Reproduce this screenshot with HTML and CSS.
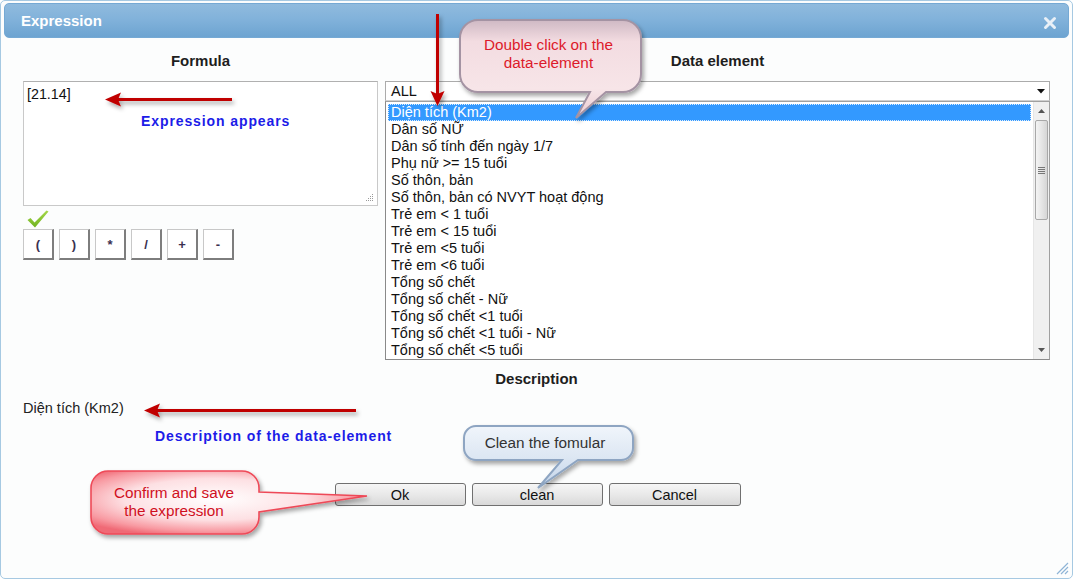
FILE: index.html
```html
<!DOCTYPE html>
<html>
<head>
<meta charset="utf-8">
<title>Expression</title>
<link rel="stylesheet" href="styles.css">
</head>
<body>
<div class="dialog">
  <div class="titlebar">
    <span class="title">Expression</span>
    <svg class="close" width="14" height="14" viewBox="0 0 14 14"><path d="M2.5 2.5 L11.5 11.5 M11.5 2.5 L2.5 11.5" stroke="#e9f0f7" stroke-width="3" stroke-linecap="round"/></svg>
  </div>
  <div class="content">
    <div class="columns">
      <div class="col-left">
        <div class="col-title">Formula</div>
        <div class="formula-box">
          <span class="formula-text">[21.14]</span>
          <svg class="grip" width="8" height="8" viewBox="0 0 8 8"><g fill="#9a9a9a"><rect x="6" y="0" width="1" height="1"/><rect x="4" y="2" width="1" height="1"/><rect x="6" y="2" width="1" height="1"/><rect x="2" y="4" width="1" height="1"/><rect x="4" y="4" width="1" height="1"/><rect x="6" y="4" width="1" height="1"/><rect x="0" y="6" width="1" height="1"/><rect x="2" y="6" width="1" height="1"/><rect x="4" y="6" width="1" height="1"/><rect x="6" y="6" width="1" height="1"/></g></svg>
        </div>
        <div class="check">
          <svg width="22" height="18" viewBox="0 0 22 18"><defs><linearGradient id="cg" x1="0" y1="0" x2="0" y2="1"><stop offset="0" stop-color="#a6d84a"/><stop offset="1" stop-color="#6fb21f"/></linearGradient></defs><path d="M0.5 10 L3.5 8 L7.5 12.5 L19.5 0.5 L21.5 1.5 L8 17.5 Z" fill="url(#cg)"/></svg>
        </div>
        <div class="ops">
          <button class="op">(</button>
          <button class="op">)</button>
          <button class="op">*</button>
          <button class="op">/</button>
          <button class="op">+</button>
          <button class="op">-</button>
        </div>
      </div>
      <div class="col-right">
        <div class="col-title">Data element</div>
        <div class="select">
          <span>ALL</span>
          <svg width="8" height="5" viewBox="0 0 8 5"><path d="M0 0 H8 L4 4.5 Z" fill="#111"/></svg>
        </div>
        <div class="listbox">
          <div class="options">
            <div class="opt selected">Diện tích (Km2)</div>
            <div class="opt">Dân số NỮ</div>
            <div class="opt">Dân số tính đến ngày 1/7</div>
            <div class="opt">Phụ nữ &gt;= 15 tuổi</div>
            <div class="opt">Số thôn, bản</div>
            <div class="opt">Số thôn, bản có NVYT hoạt động</div>
            <div class="opt">Trẻ em &lt; 1 tuổi</div>
            <div class="opt">Trẻ em &lt; 15 tuổi</div>
            <div class="opt">Trẻ em &lt;5 tuổi</div>
            <div class="opt">Trẻ em &lt;6 tuổi</div>
            <div class="opt">Tổng số chết</div>
            <div class="opt">Tổng số chết - Nữ</div>
            <div class="opt">Tổng số chết &lt;1 tuổi</div>
            <div class="opt">Tổng số chết &lt;1 tuổi - Nữ</div>
            <div class="opt">Tổng số chết &lt;5 tuổi</div>
            <div class="opt">Tổng số chết &lt;5 tuổi - Nữ</div>
          </div>
          <div class="scrollbar">
            <div class="sb-arrow"><svg width="7" height="4" viewBox="0 0 7 4"><path d="M0 4 H7 L3.5 0 Z" fill="#555"/></svg></div>
            <div class="sb-thumb">
              <svg width="7" height="7" viewBox="0 0 7 7"><g fill="#777"><rect x="0" y="0" width="7" height="1"/><rect x="0" y="2" width="7" height="1"/><rect x="0" y="4" width="7" height="1"/><rect x="0" y="6" width="7" height="1"/></g></svg>
            </div>
            <div class="sb-track"></div>
            <div class="sb-arrow"><svg width="7" height="4" viewBox="0 0 7 4"><path d="M0 0 H7 L3.5 4 Z" fill="#555"/></svg></div>
          </div>
        </div>
      </div>
    </div>
    <div class="desc-title">Description</div>
    <div class="desc-text">Diện tích (Km2)</div>
    <div class="actions">
      <button class="btn">Ok</button>
      <button class="btn">clean</button>
      <button class="btn btn-wide">Cancel</button>
    </div>
  </div>
  <svg class="resize" width="14" height="14" viewBox="0 0 14 14"><path d="M13 2 L2 13 M13 6 L6 13 M13 10 L10 13" stroke="#8fb4d6" stroke-width="1.2"/></svg>
</div>

<svg class="overlay" width="1073" height="579" viewBox="0 0 1073 579">
  <defs>
    <filter id="sh" x="-20%" y="-20%" width="140%" height="160%">
      <feDropShadow dx="2" dy="3" stdDeviation="2" flood-color="#000" flood-opacity="0.35"/>
    </filter>
    <linearGradient id="pink" x1="0" y1="0" x2="0" y2="1">
      <stop offset="0" stop-color="#cfb9c4"/>
      <stop offset="0.22" stop-color="#f3dce1"/>
      <stop offset="0.7" stop-color="#f7e5e8"/>
      <stop offset="1" stop-color="#ecccd2"/>
    </linearGradient>
    <linearGradient id="blue" x1="0" y1="0" x2="0" y2="1">
      <stop offset="0" stop-color="#f0f5fb"/>
      <stop offset="0.5" stop-color="#dde7f3"/>
      <stop offset="1" stop-color="#c3d4ea"/>
    </linearGradient>
    <radialGradient id="red" cx="0.45" cy="0.45" r="0.6">
      <stop offset="0" stop-color="#ffffff"/>
      <stop offset="0.55" stop-color="#fde0e3"/>
      <stop offset="0.85" stop-color="#f89aa2"/>
      <stop offset="1" stop-color="#f06a76"/>
    </radialGradient>
  </defs>

  <g filter="url(#sh)" fill="#c00000" stroke="none">
    <rect x="116" y="98" width="116" height="3"/>
    <path d="M105 99.5 L121 92.5 L118 99.5 L121 106.5 Z"/>
    <rect x="436" y="14" width="3" height="82"/>
    <path d="M437.5 106 L430.5 91 L437.5 94 L444.5 91 Z"/>
    <rect x="156" y="409" width="200" height="3"/>
    <path d="M144 410.5 L160 403.5 L157 410.5 L160 417.5 Z"/>
  </g>

  <path filter="url(#sh)" d="M478 20 H623 A18 18 0 0 1 641 38 V74 A18 18 0 0 1 623 92 H606 L576 118 L590 92 H478 A18 18 0 0 1 460 74 V38 A18 18 0 0 1 478 20 Z" fill="url(#pink)" stroke="#a493a3" stroke-width="2"/>

  <path filter="url(#sh)" d="M476 426 H621 A12 12 0 0 1 633 438 V448 A12 12 0 0 1 621 460 H578 L538 488 L562 460 H476 A12 12 0 0 1 464 448 V438 A12 12 0 0 1 476 426 Z" fill="url(#blue)" stroke="#8ea5c2" stroke-width="2"/>

  <path filter="url(#sh)" d="M108 471 H242 A17 17 0 0 1 259 488 V492 L367 496 L259 512 V517 A17 17 0 0 1 242 534 H108 A17 17 0 0 1 91 517 V488 A17 17 0 0 1 108 471 Z" fill="url(#red)" stroke="#ee4a58" stroke-width="1.6"/>
</svg>

<div class="note note-expr">Expression appears</div>
<div class="note note-desc">Description of the data-element</div>
<div class="bubble-text bt-double">Double click on the<br>data-element</div>
<div class="bubble-text bt-clean">Clean the fomular</div>
<div class="bubble-text bt-confirm">Confirm and save<br>the expression</div>
</body>
</html>
```

FILE: styles.css
```css
html, body {
  margin: 0;
  padding: 0;
}
body {
  position: relative;
  width: 1073px;
  height: 579px;
  overflow: hidden;
  font-family: "Liberation Sans", Arial, sans-serif;
  font-size: 14px;
  color: #111;
  background: #ffffff;
}
.dialog {
  position: relative;
  box-sizing: border-box;
  height: 579px;
  border: 1px solid #a6c9e2;
  border-radius: 5px;
  padding: 2px 3px;
  background: #fcfdfd;
  display: flex;
  flex-direction: column;
}
.titlebar {
  box-sizing: border-box;
  height: 35px;
  border: 1px solid #75a9d4;
  border-radius: 5px;
  background: linear-gradient(#90bbde, #80b1da 50%, #6da4d1);
  display: flex;
  align-items: center;
  justify-content: space-between;
  padding: 0 11px 0 16px;
}
.title {
  color: #ffffff;
  font-weight: bold;
  font-size: 15px;
  line-height: 18px;
}
.close {
  display: block;
  margin-top: 4px;
}
.content {
  padding: 14px 19px 0 19px;
  display: flex;
  flex-direction: column;
}
.columns {
  display: flex;
  gap: 7px;
}
.col-left {
  width: 355px;
  display: flex;
  flex-direction: column;
}
.col-right {
  flex: 1;
  display: flex;
  flex-direction: column;
}
.col-title, .desc-title {
  text-align: center;
  font-weight: bold;
  font-size: 15px;
  line-height: 18px;
  color: #1e1e1e;
}
.col-title {
  margin-bottom: 11px;
}
.formula-box {
  position: relative;
  box-sizing: border-box;
  height: 125px;
  border: 1px solid #c9c9c9;
  border-top-color: #b0b0b0;
  background: #fff;
  padding: 4px 3px;
  line-height: 17px;
  font-size: 14.3px;
}
.formula-text {
  color: #111;
}
.grip {
  position: absolute;
  right: 3px;
  bottom: 3px;
}
.check {
  height: 17px;
  margin-top: 4px;
  padding-left: 4px;
}
.check svg {
  display: block;
}
.ops {
  display: flex;
  gap: 5px;
  margin-top: 2px;
}
.op {
  box-sizing: border-box;
  width: 31px;
  height: 31px;
  padding: 0;
  margin: 0;
  background: #ffffff;
  border-top: 1px solid #c8c8c8;
  border-left: 1px solid #c8c8c8;
  border-right: 2px solid #7d7d7d;
  border-bottom: 2px solid #7d7d7d;
  border-radius: 0;
  font-family: "Liberation Sans", Arial, sans-serif;
  font-size: 13px;
  font-weight: bold;
  color: #3a3050;
}
.select {
  box-sizing: border-box;
  height: 20px;
  border: 1px solid #ababab;
  border-bottom-color: #d0d0d0;
  background: #fff;
  display: flex;
  align-items: center;
  justify-content: space-between;
  padding: 0 4px 0 5px;
  font-size: 14.5px;
}
.listbox {
  box-sizing: border-box;
  height: 259px;
  border: 1px solid #a0a0a0;
  border-left-color: #8a8a8a;
  border-bottom-color: #8a8a8a;
  background: #fff;
  display: flex;
  overflow: hidden;
}
.options {
  flex: 1;
  padding: 2px 2px 0 2px;
  overflow: hidden;
}
.opt {
  height: 17px;
  line-height: 17px;
  padding-left: 3px;
  white-space: nowrap;
  font-size: 14.5px;
  color: #111;
}
.opt.selected {
  box-sizing: border-box;
  background: #3399ff;
  color: #ffffff;
  outline: 1px dotted #d9ecff;
  outline-offset: -1px;
}
.scrollbar {
  width: 16px;
  box-sizing: border-box;
  border-left: 1px solid #e6e6e6;
  background: #f0f0f0;
  display: flex;
  flex-direction: column;
}
.sb-arrow {
  height: 18px;
  display: flex;
  align-items: center;
  justify-content: center;
}
.sb-thumb {
  box-sizing: border-box;
  height: 100px;
  margin: 0 1px;
  border: 1px solid #a8a8a8;
  border-radius: 2px;
  background: linear-gradient(90deg, #f4f4f4, #e6e6e6 50%, #d6d6d6);
  display: flex;
  align-items: center;
  justify-content: center;
}
.sb-thumb svg {
  display: block;
}
.sb-track {
  flex: 1;
}
.desc-title {
  margin-top: 10px;
}
.desc-text {
  margin-top: 12px;
  line-height: 16px;
  font-size: 14.5px;
  color: #222;
}
.actions {
  display: flex;
  justify-content: center;
  gap: 6px;
  margin-top: 67px;
  padding-left: 2px;
}
.btn {
  box-sizing: border-box;
  width: 131px;
  height: 23px;
  margin: 0;
  padding: 0;
  border: 1px solid #707070;
  border-radius: 3px;
  background: linear-gradient(#f6f6f6, #e9e9e9 50%, #d9d9d9);
  font-family: "Liberation Sans", Arial, sans-serif;
  font-size: 14.5px;
  color: #111;
}
.btn-wide {
  width: 132px;
}
.resize {
  position: absolute;
  right: 3px;
  bottom: 3px;
}
.overlay {
  position: absolute;
  left: 0;
  top: 0;
  pointer-events: none;
}
.note {
  position: absolute;
  color: #1c1ce8;
  font-weight: bold;
  font-size: 14px;
  letter-spacing: 0.9px;
  line-height: 16px;
  white-space: nowrap;
}
.note-expr {
  left: 141px;
  top: 113px;
}
.note-desc {
  left: 155px;
  top: 428px;
}
.bubble-text {
  position: absolute;
  text-align: center;
  font-size: 15.3px;
  line-height: 18px;
  white-space: nowrap;
}
.bt-double {
  left: 458px;
  width: 181px;
  top: 36px;
  color: #dd1a2a;
}
.bt-clean {
  left: 464px;
  width: 162px;
  top: 434px;
  color: #333;
}
.bt-confirm {
  left: 90px;
  width: 168px;
  top: 484px;
  color: #d0101e;
}
```
